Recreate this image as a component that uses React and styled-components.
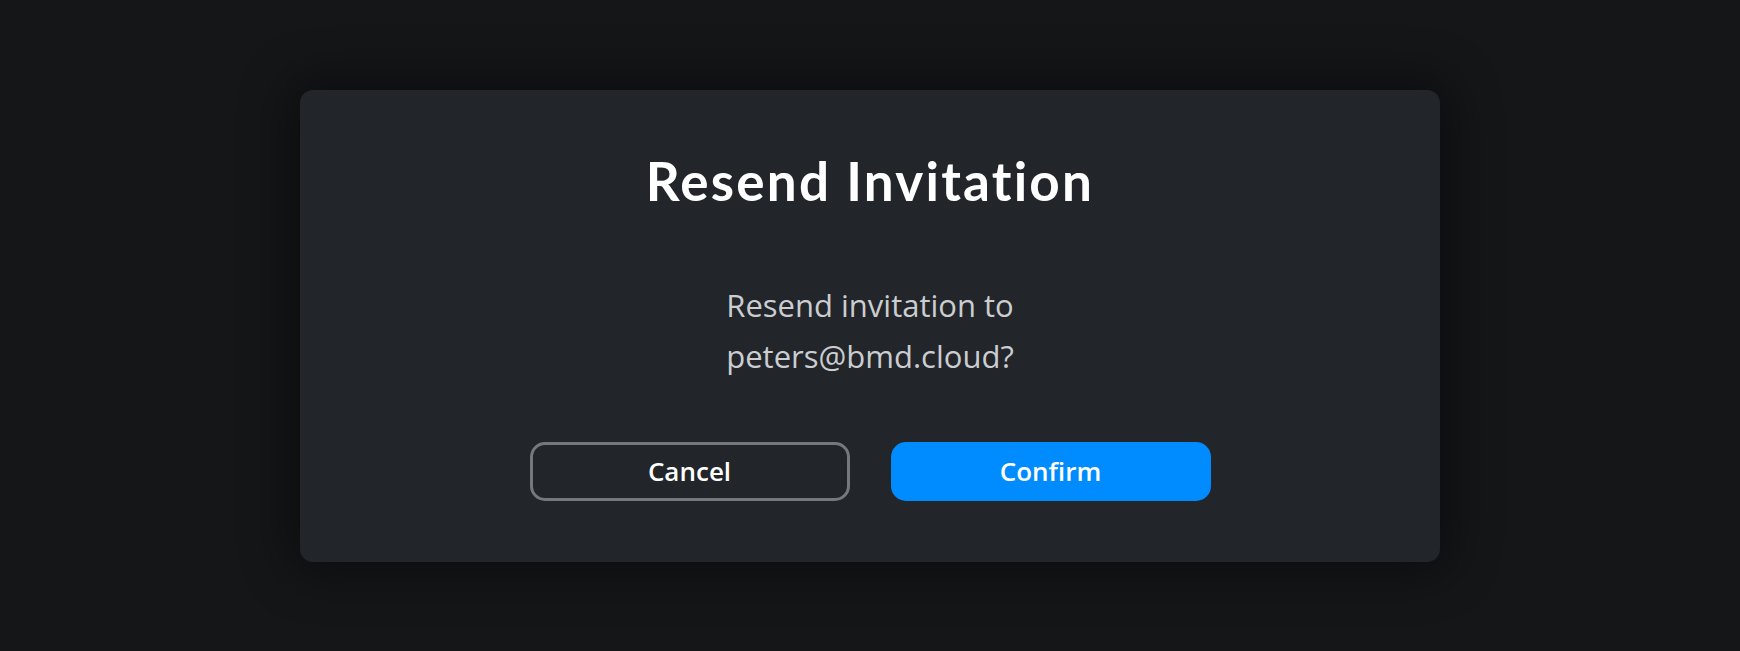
import React from "react";
import styled, { createGlobalStyle } from "styled-components";

const Global = createGlobalStyle`
  html, body { margin: 0; padding: 0; background: #151618; }
  body { font-family: "Open Sans", "Noto Sans", sans-serif; }
  * { box-sizing: border-box; }
`;

const Page = styled.div`
  width: 100%;
  height: 651px;
  display: flex;
  align-items: center;
  justify-content: center;
  background: #151618;
`;

const Dialog = styled.div`
  width: 1140px;
  height: 472px;
  background: #22252a;
  border-radius: 13px;
  box-shadow: 0 0 50px 10px rgba(0, 0, 0, 0.45);
  display: flex;
  flex-direction: column;
  align-items: center;
  padding-top: 60px;
`;

const Title = styled.h1`
  margin: 0;
  font-family: "Lato", sans-serif;
  font-weight: 700;
  font-size: 53px;
  line-height: 62px;
  color: #ffffff;
  letter-spacing: 2.2px;
`;

const Message = styled.p`
  margin: 68px 0 0;
  font-family: "Open Sans", sans-serif;
  font-weight: 400;
  font-size: 31px;
  line-height: 51px;
  color: #cbcdd0;
  text-align: center;
`;

const Actions = styled.div`
  display: flex;
  gap: 41px;
  margin-top: 60px;
`;

const Button = styled.button`
  width: 320px;
  height: 59px;
  border-radius: 15px;
  font-family: "Open Sans", sans-serif;
  font-weight: 600;
  font-size: 26px;
  color: #ffffff;
  cursor: pointer;
  border: ${(p) => (p.$primary ? "none" : "3px solid #76787b")};
  background: ${(p) => (p.$primary ? "#008cff" : "transparent")};
`;

export default function App() {
  return (
    <>
      <Global />
      <Page>
        <Dialog>
          <Title>Resend Invitation</Title>
          <Message>
            Resend invitation to
            <br />
            peters@bmd.cloud?
          </Message>
          <Actions>
            <Button>Cancel</Button>
            <Button $primary>Confirm</Button>
          </Actions>
        </Dialog>
      </Page>
    </>
  );
}
